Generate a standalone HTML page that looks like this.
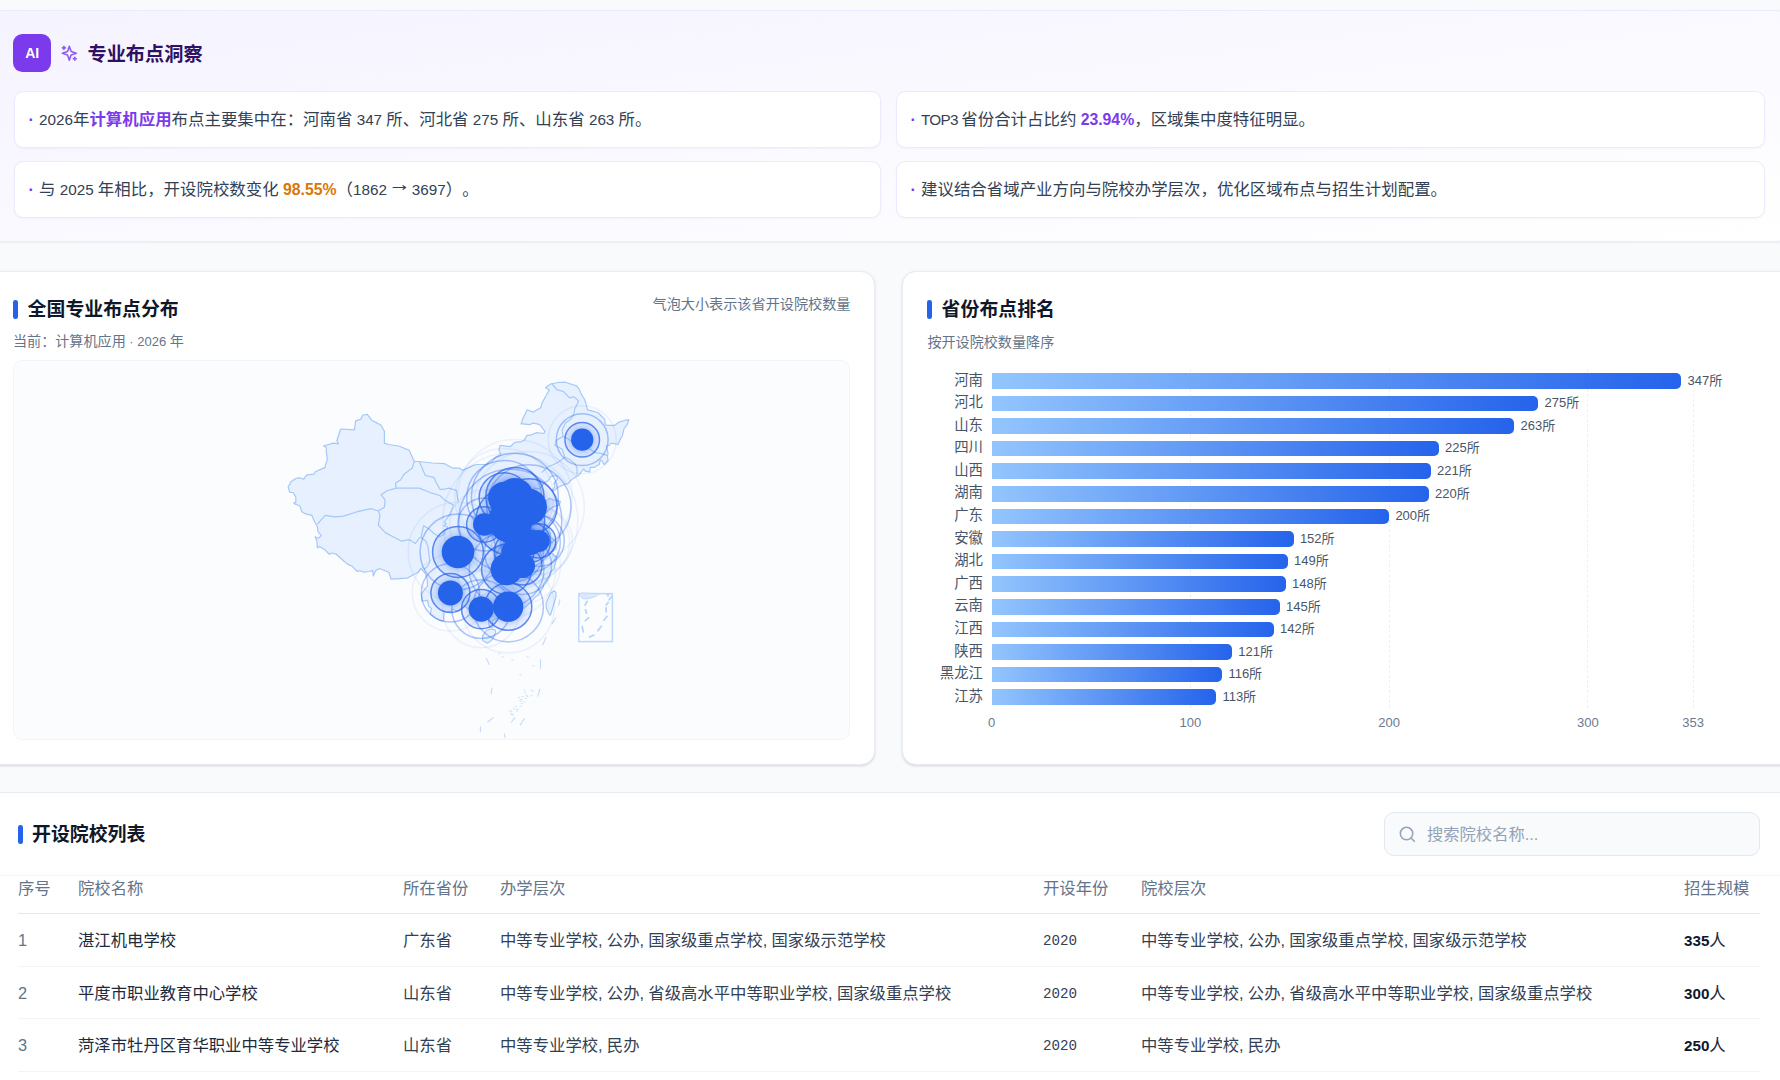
<!DOCTYPE html>
<html lang="zh-CN">
<head>
<meta charset="utf-8">
<title>专业布点洞察</title>
<style>
*{box-sizing:border-box;margin:0;padding:0}
html,body{width:1780px;height:1080px;overflow:hidden;background:#f8fafc}
body{text-spacing-trim:space-all;font-family:"Liberation Sans","Noto Sans CJK SC",sans-serif;color:#1e293b;position:relative}
.abs{position:absolute}
.t{position:absolute;white-space:nowrap;line-height:1}
/* AI panel */
#ai{left:-12.5px;top:10px;width:1803.5px;height:232px;background:linear-gradient(to bottom right,#f5f3ff 0%,#fff 100%);border:1px solid #ede9fe;border-radius:14px;box-shadow:0 1px 2px rgba(30,27,75,.05)}
.badge{left:13.4px;top:34px;width:37.4px;height:38px;border-radius:9.3px;background:#7c3aed;color:#fff;font-weight:700;font-size:14px;letter-spacing:-.2px;display:flex;align-items:center;justify-content:center}
.ins{background:#fff;border:1px solid #ede9fe;border-radius:9.3px;height:57px;box-shadow:0 1px 2px rgba(124,58,237,.05)}
.ins .t{top:19px;font-size:16.45px;color:#334155}
.dot{color:#7c3aed;font-weight:700}
.n{font-size:15.25px}
.cj{display:inline-block;transform:translateY(-5.2px) scale(1.38,1.3);transform-origin:50% 58%}
.hl{color:#7c3aed;font-weight:700}
.n .hl,.n .hl2{font-size:15.8px}
.hl2{color:#d97706;font-weight:700}
/* cards */
.card{background:#fff;border:1px solid #e9edf2;border-radius:14px;box-shadow:0 1px 3px rgba(15,23,42,.10),0 1px 2px rgba(15,23,42,.06)}
.bar4{position:absolute;width:4.7px;height:19.2px;border-radius:2.35px;background:#2563eb}
.h2{font-size:18.9px;font-weight:700;color:#0f172a}
.sub{font-size:14.1px;color:#64748b}
/* table */
#tbl{left:0;top:792px;width:1780px;height:300px;background:#fff;border-top:1px solid #e8ecf1}
.th{font-size:16.35px;color:#64748b}
.td{font-size:16.35px;color:#334155;word-spacing:-.3px}
.nm{color:#1e293b}
.line{position:absolute;height:1px;background:#e9edf2;left:18px;width:1742px}

/* rank chart */
.gl{position:absolute;top:369px;height:339px;width:0;border-left:1px dashed #edf1f6}
.tick{top:716px;width:60px;text-align:center;font-size:13px;color:#6b7a90}
.cat{left:903px;width:80px;text-align:right;font-size:14.4px;color:#475569}
.hb{position:absolute;left:991.5px;height:15.6px;border-radius:0 5px 5px 0;background:linear-gradient(90deg,#93c5fd 0%,#2563eb 100%)}
.val{font-size:13px;color:#475569}
.idx{color:#64748b}
.yr{font-family:"Liberation Mono","DejaVu Sans Mono",monospace;font-size:14.2px;color:#334155}
.num{color:#1e293b}
.num b{font-weight:700;color:#0f172a;font-size:15.2px}
.search{left:1384px;top:812px;width:376px;height:44px;border:1px solid #e2e8f0;background:#f8fafc;border-radius:10px}
</style>
</head>
<body>
<!-- AI insight panel -->
<div id="ai" class="abs"></div>
<div class="abs badge">AI</div>
<svg class="abs" style="left:60.3px;top:43.8px" width="18.67" height="18.67" viewBox="0 0 24 24" fill="none" stroke="#8b5cf6" stroke-width="2" stroke-linecap="round" stroke-linejoin="round"><path d="m12 3-1.912 5.813a2 2 0 0 1-1.275 1.275L3 12l5.813 1.912a2 2 0 0 1 1.275 1.275L12 21l1.912-5.813a2 2 0 0 1 1.275-1.275L21 12l-5.813-1.912a2 2 0 0 1-1.275-1.275L12 3Z"/><path d="M5 3v4"/><path d="M19 17v4"/><path d="M3 5h4"/><path d="M17 19h4"/></svg>
<div class="t" style="left:87.5px;top:45px;font-size:19.2px;font-weight:700;color:#2e1065">专业布点洞察</div>

<div class="abs ins" style="left:14px;top:91px;width:867px"><span class="t" style="left:13.5px"><span class="dot">·</span></span><span class="t" style="left:24px"><span class="n">2026</span>年<span class="hl">计算机应用</span>布点主要集中在：河南省<span class="n"> 347 </span>所、河北省<span class="n"> 275 </span>所、山东省<span class="n"> 263 </span>所。</span></div>
<div class="abs ins" style="left:896px;top:91px;width:868.7px"><span class="t" style="left:13.5px"><span class="dot">·</span></span><span class="t" style="left:24px"><span class="n" style="letter-spacing:-.7px">TOP3 </span>省份合计占比约<span class="n"> <span class="hl">23.94%</span></span>，区域集中度特征明显。</span></div>
<div class="abs ins" style="left:14px;top:161px;width:867px"><span class="t" style="left:13.5px"><span class="dot">·</span></span><span class="t" style="left:24px">与<span class="n"> 2025 </span>年相比，开设院校数变化<span class="n"> <span class="hl2">98.55%</span></span>（<span class="n">1862 </span><span class="cj">→</span><span class="n"> 3697</span>）。</span></div>
<div class="abs ins" style="left:896px;top:161px;width:868.7px"><span class="t" style="left:13.5px"><span class="dot">·</span></span><span class="t" style="left:24px">建议结合省域产业方向与院校办学层次，优化区域布点与招生计划配置。</span></div>

<!-- Map card -->
<div class="abs card" id="mapcard" style="left:-20px;top:271px;width:895px;height:494px"></div>
<div class="bar4" style="left:13.3px;top:299.6px"></div>
<div class="t h2" style="left:27.6px;top:301px">全国专业布点分布</div>
<div class="t sub" style="left:13px;top:334.3px">当前：计算机应用<span style="font-size:13px"> · 2026 </span>年</div>
<div class="t" style="right:929.5px;top:297.2px;font-size:14.15px;color:#64748b">气泡大小表示该省开设院校数量</div>
<div class="abs" id="mapbox" style="left:13.2px;top:360.2px;width:836.8px;height:379.8px;background:#fbfcfe;border:1px solid #f1f5f9;border-radius:9.3px;overflow:hidden">
<svg class="abs" style="left:0;top:0" width="834" height="377" viewBox="0 0 834 377">
<g fill="#e6f0fe" stroke="#a6c8f8" stroke-width="1.2" stroke-linejoin="round">
<path d="M353.3,53.3 L357.7,59.2 L363.2,62.1 L367.1,64.3 L370.4,70.3 L370.4,82.1 L374.3,83.5 L384.8,85.0 L395.3,89.4 L400.3,100.5 L405.3,100.5 L418.0,102.0 L430.7,102.7 L439.0,107.2 L445.7,107.2 L448.5,109.4 L458.4,104.9 L462.3,103.5 L472.3,103.5 L478.3,100.5 L481.7,96.1 L486.6,93.9 L485.0,88.7 L486.1,84.3 L496.1,85.7 L501.0,81.3 L507.7,80.6 L510.4,79.1 L512.7,74.7 L517.1,73.9 L522.1,71.7 L529.8,72.5 L530.9,70.3 L526.5,64.3 L523.2,62.9 L519.3,62.1 L515.4,63.6 L509.3,62.9 L507.1,62.9 L508.8,57.7 L513.2,48.8 L519.3,51.1 L527.0,46.6 L527.6,42.9 L532.0,34.8 L535.4,28.9 L531.5,26.7 L536.5,23.0 L544.2,21.5 L551.4,21.2 L559.2,23.8 L562.5,24.9 L565.2,28.2 L567.5,33.4 L570.2,37.8 L571.9,42.2 L573.5,48.8 L579.6,50.3 L584.1,51.8 L587.9,55.5 L590.7,58.4 L591.3,62.9 L592.4,64.3 L600.7,64.3 L604.5,61.4 L611.2,59.2 L614.9,58.8 L612.8,64.3 L610.1,67.3 L608.4,74.7 L606.2,78.4 L604.0,83.5 L597.3,82.1 L595.1,84.3 L592.4,85.0 L594.0,91.7 L593.5,95.3 L594.0,99.8 L590.1,103.5 L587.9,99.8 L586.3,99.0 L585.2,103.5 L582.4,104.9 L580.7,106.4 L576.3,106.4 L575.8,110.8 L571.3,110.1 L569.7,107.9 L564.7,114.5 L559.2,117.5 L555.8,120.4 L554.2,122.6 L550.8,123.4 L544.2,126.3 L540.3,129.3 L537.6,130.0 L540.9,125.6 L539.8,122.6 L543.7,117.5 L542.0,114.5 L537.0,115.3 L534.2,119.7 L530.4,121.5 L527.6,125.6 L525.4,127.8 L520.4,127.1 L518.7,129.3 L518.2,131.5 L520.4,135.2 L525.4,136.7 L527.0,137.4 L525.7,141.1 L527.0,142.6 L530.9,141.1 L535.4,137.4 L539.2,138.9 L543.1,139.6 L546.4,140.4 L545.3,144.1 L539.8,145.5 L535.4,148.5 L533.1,150.7 L529.3,155.1 L527.0,158.8 L530.9,162.5 L533.7,165.5 L536.5,172.8 L536.5,175.8 L541.4,180.2 L542.0,182.4 L542.0,187.6 L539.8,189.8 L537.0,190.5 L534.2,192.8 L538.1,192.8 L541.4,195.3 L543.1,195.7 L542.0,200.9 L540.3,204.6 L540.3,207.5 L537.0,210.5 L534.8,215.6 L532.6,218.6 L529.8,222.3 L529.3,226.0 L526.5,230.4 L524.3,234.1 L521.0,236.3 L516.5,241.5 L513.2,244.4 L509.3,247.4 L503.8,248.8 L499.4,251.1 L496.1,252.5 L495.5,248.8 L492.7,254.0 L487.2,255.5 L481.7,257.7 L478.3,259.9 L478.9,266.6 L475.6,266.6 L474.5,260.7 L475.6,257.7 L471.1,257.7 L467.3,257.0 L465.1,257.7 L461.7,257.0 L457.9,254.0 L457.3,249.6 L453.4,247.4 L450.1,244.4 L447.3,247.4 L442.9,250.3 L439.0,248.1 L436.8,250.3 L432.4,251.1 L430.2,250.3 L429.6,259.9 L427.4,259.9 L421.9,257.7 L421.3,257.0 L416.3,253.3 L417.5,247.4 L414.7,245.2 L413.6,239.3 L408.0,240.0 L407.5,233.3 L410.8,228.2 L413.6,225.2 L413.0,217.1 L411.4,212.7 L406.9,207.5 L404.2,211.2 L398.6,214.2 L393.1,217.1 L382.0,217.9 L377.1,218.2 L374.8,211.2 L371.0,209.7 L365.4,207.5 L361.6,209.7 L359.3,214.9 L358.8,209.7 L354.9,210.5 L349.9,211.2 L346.1,209.7 L343.3,210.5 L338.3,205.3 L333.3,203.1 L328.3,198.7 L321.7,192.8 L316.7,192.0 L315.6,193.5 L311.2,189.1 L305.6,185.4 L303.4,186.9 L302.9,180.2 L301.2,175.8 L304.5,177.3 L307.3,174.3 L304.0,170.6 L303.4,165.5 L300.7,161.0 L297.9,154.4 L291.8,152.9 L287.9,150.7 L285.7,144.8 L281.3,143.3 L279.6,141.8 L281.8,141.5 L281.8,135.9 L279.1,131.5 L275.8,131.5 L274.1,125.6 L276.3,122.6 L276.3,121.2 L281.8,117.5 L285.7,116.7 L289.6,118.2 L292.9,113.8 L300.1,113.1 L301.2,110.8 L311.2,106.4 L311.2,104.9 L313.4,98.3 L312.3,90.9 L312.3,86.5 L309.5,85.0 L319.5,82.1 L324.5,82.8 L322.8,79.8 L326.7,68.0 L340.5,68.8 L341.6,59.9 L346.6,58.4 L348.8,54.0Z"/>
<path d="M537.0,231.9 L540.3,229.7 L542.0,231.9 L542.0,235.6 L539.2,245.2 L536.5,254.0 L535.4,254.0 L532.6,248.1 L532.0,242.2 L535.4,234.8Z"/>
<path d="M468.9,274.7 L472.3,269.5 L476.1,268.0 L481.1,268.8 L481.7,271.7 L478.9,277.6 L476.1,280.6 L473.4,282.1 L468.9,279.8 L468.4,276.2Z"/>
</g>
<g fill="none" stroke="#a6c8f8" stroke-width="1.2" stroke-linejoin="round">
<path d="M303.4,163.2 L311.2,154.4 L321.1,155.9 L329.5,155.1 L343.3,150.7 L357.1,147.7 L364.3,150.0"/>
<path d="M364.3,150.0 L370.4,146.3 L371.0,138.9 L367.1,133.7 L372.6,130.0 L382.0,127.1"/>
<path d="M382.0,127.1 L381.5,121.9 L386.5,119.0 L390.3,113.1 L398.1,107.2 L400.3,100.5"/>
<path d="M364.3,150.0 L366.0,154.4 L364.3,164.0 L371.0,171.4 L377.6,175.0 L387.6,180.2 L395.3,178.7 L401.4,182.4 L405.8,176.5 L406.9,176.5"/>
<path d="M406.9,176.5 L411.9,180.2 L414.1,186.1 L415.2,195.0 L415.8,200.9 L413.0,206.0 L409.7,208.3"/>
<path d="M406.9,176.5 L409.7,164.7 L414.7,167.7 L420.2,172.8 L425.8,175.8 L430.7,172.8 L430.7,169.1 L434.1,166.2"/>
<path d="M382.0,127.1 L389.8,127.1 L398.6,127.1 L405.3,127.1 L412.5,130.0 L418.0,132.2 L425.8,134.5 L430.7,138.9 L435.2,141.8 L439.6,144.1 L437.4,149.2 L435.7,153.6 L433.5,156.6 L430.2,161.0 L432.4,163.2 L429.6,164.7 L434.1,166.2"/>
<path d="M405.3,100.5 L409.2,109.4 L411.4,114.5 L420.2,116.7 L421.9,121.2 L426.3,128.6 L431.8,127.8 L434.6,127.1 L442.4,129.3 L444.0,140.4"/>
<path d="M538.1,23.0 L543.1,28.9 L549.2,30.4 L555.8,37.0 L559.7,35.6 L564.7,40.0 L560.8,48.1 L559.7,54.0 L556.4,58.4 L551.4,62.1 L548.1,69.5 L549.2,75.4"/>
<path d="M549.2,75.4 L553.6,77.6 L558.6,81.3 L564.7,83.5 L570.2,87.2 L575.8,88.0 L581.3,91.7 L586.8,92.4 L593.5,94.6"/>
<path d="M550.8,96.1 L555.3,98.3 L560.8,102.7 L563.0,106.4 L563.0,114.5"/>
<path d="M549.2,75.4 L542.5,79.1 L540.9,84.3 L548.1,88.0 L550.8,96.1"/>
<path d="M550.8,96.1 L545.3,100.5 L539.8,103.5 L534.2,105.7 L527.6,111.6"/>
</g>
<rect x="564.8" y="232.6" width="33.6" height="48" fill="none" stroke="#c0d9fb" stroke-width="1.5"/>
<path d="M565.2,233.6 L567.4,232.0 L585.8,232.6 L580.6,235.8 L573.9,237.8 L568.9,237.8Z" fill="#dbe9fd" stroke="#c0d9fb" stroke-width="1"/>
<path d="M591.7,232.9 L596.3,232.9 L593.9,236.3Z" fill="#c0d9fb" stroke="none"/>
<path d="M573.1,240.4 L571.1,244.1 M571.4,248.8 L572.5,252.1 M574.7,256.7 L571.4,259.7 M568.2,265.6 L569.2,270.8 M575.4,276.0 L579.9,274.1 M583.9,269.8 L587.3,265.2 M589.9,259.2 L592.9,255.5 M592.1,246.9 L592.1,250.7 M592.3,244.0 L594.1,241.5 M595.1,238.8 L597.8,235.4" fill="none" stroke="#b9d4fb" stroke-width="1.8" stroke-linecap="round"/>
<path d="M472.3,297.1 L475.1,303.4 M526.5,298.5 L526.5,307.6 M477.9,327.0 L477.2,332.6 M525.8,328.4 L523.7,335.3 M466.4,365.9 L466.4,370.8 M490.4,372.8 L491.1,377.0 M510.5,357.6 L506.4,363.8 M500.8,356.8 L497.3,361.0 M545.9,238.8 L544.6,244.4 M541.8,256.8 L538.3,262.4 M532.1,276.3 L528.6,283.9 M473.8,360.8 L479.3,356.8" fill="none" stroke="#c4dbfb" stroke-width="1.1" stroke-linecap="round"/>
<path d="M499.4,347.6h1.2 M508.1,335.6h1.2 M496.8,352.5h1.2 M502.9,348.5h1.2 M512.0,334.2h1.2 M498.2,353.8h1.2 M507.2,342.6h1.2 M497.3,353.9h1.2 M496.7,349.9h1.2 M506.0,345.5h1.2 M512.9,335.4h1.2 M511.0,337.5h1.2 M509.9,329.0h1.2 M502.3,348.6h1.2 M506.0,338.6h1.2 M501.1,345.4h1.2 M509.9,341.1h1.2 M517.1,334.6h1.2 M505.9,340.2h1.2 M518.3,330.3h1.2 M507.2,338.9h1.2 M504.7,336.4h1.2 M516.5,329.3h1.2 M510.7,331.2h1.2 M502.4,350.1h1.2 M495.7,350.0h1.2 M484.8,292.8h1.4 M487.8,295.8h1.4 M497.8,298.8h1.4 M512.8,295.8h1.4 M518.8,304.8h1.4 M505.8,313.8h1.4" fill="none" stroke="#cfe1fc" stroke-width="1" stroke-linecap="round"/>
<defs><radialGradient id="halo" cx="50%" cy="50%" r="50%"><stop offset="0.62" stop-color="#2563eb" stop-opacity=".27"/><stop offset="0.8" stop-color="#2563eb" stop-opacity=".14"/><stop offset="1" stop-color="#2563eb" stop-opacity=".08"/></radialGradient></defs>
<g fill="none" stroke="#2563eb" stroke-width="1.5"><circle cx="496.3" cy="159.8" r="67.6" stroke-opacity=".08"/><circle cx="496.3" cy="159.8" r="51.5" stroke-opacity=".36"/><circle cx="496.3" cy="159.8" r="34.4" stroke-opacity=".72" fill="url(#halo)"/><circle cx="500.9" cy="135.7" r="57.1" stroke-opacity=".08"/><circle cx="500.9" cy="135.7" r="43.5" stroke-opacity=".36"/><circle cx="500.9" cy="135.7" r="29.1" stroke-opacity=".72" fill="url(#halo)"/><circle cx="514.9" cy="145.9" r="55.4" stroke-opacity=".08"/><circle cx="514.9" cy="145.9" r="42.2" stroke-opacity=".36"/><circle cx="514.9" cy="145.9" r="28.2" stroke-opacity=".72" fill="url(#halo)"/><circle cx="444.0" cy="191.0" r="49.8" stroke-opacity=".08"/><circle cx="444.0" cy="191.0" r="37.9" stroke-opacity=".36"/><circle cx="444.0" cy="191.0" r="25.4" stroke-opacity=".72" fill="url(#halo)"/><circle cx="490.2" cy="136.9" r="49.3" stroke-opacity=".08"/><circle cx="490.2" cy="136.9" r="37.5" stroke-opacity=".36"/><circle cx="490.2" cy="136.9" r="25.1" stroke-opacity=".72" fill="url(#halo)"/><circle cx="492.6" cy="208.3" r="49.1" stroke-opacity=".08"/><circle cx="492.6" cy="208.3" r="37.4" stroke-opacity=".36"/><circle cx="492.6" cy="208.3" r="25.0" stroke-opacity=".72" fill="url(#halo)"/><circle cx="494.2" cy="245.7" r="46.2" stroke-opacity=".08"/><circle cx="494.2" cy="245.7" r="35.2" stroke-opacity=".36"/><circle cx="494.2" cy="245.7" r="23.6" stroke-opacity=".72" fill="url(#halo)"/><circle cx="516.4" cy="181.2" r="39.2" stroke-opacity=".08"/><circle cx="516.4" cy="181.2" r="29.9" stroke-opacity=".36"/><circle cx="516.4" cy="181.2" r="20.0" stroke-opacity=".72" fill="url(#halo)"/><circle cx="500.0" cy="191.1" r="38.8" stroke-opacity=".08"/><circle cx="500.0" cy="191.1" r="29.5" stroke-opacity=".36"/><circle cx="500.0" cy="191.1" r="19.8" stroke-opacity=".72" fill="url(#halo)"/><circle cx="467.2" cy="248.1" r="38.6" stroke-opacity=".08"/><circle cx="467.2" cy="248.1" r="29.4" stroke-opacity=".36"/><circle cx="467.2" cy="248.1" r="19.7" stroke-opacity=".72" fill="url(#halo)"/><circle cx="436.4" cy="231.9" r="38.2" stroke-opacity=".08"/><circle cx="436.4" cy="231.9" r="29.1" stroke-opacity=".36"/><circle cx="436.4" cy="231.9" r="19.5" stroke-opacity=".72" fill="url(#halo)"/><circle cx="508.7" cy="204.7" r="37.8" stroke-opacity=".08"/><circle cx="508.7" cy="204.7" r="28.8" stroke-opacity=".36"/><circle cx="508.7" cy="204.7" r="19.3" stroke-opacity=".72" fill="url(#halo)"/><circle cx="470.3" cy="163.5" r="34.7" stroke-opacity=".08"/><circle cx="470.3" cy="163.5" r="26.4" stroke-opacity=".36"/><circle cx="470.3" cy="163.5" r="17.7" stroke-opacity=".72" fill="url(#halo)"/><circle cx="568.2" cy="78.7" r="34.0" stroke-opacity=".08"/><circle cx="568.2" cy="78.7" r="25.9" stroke-opacity=".36"/><circle cx="568.2" cy="78.7" r="17.3" stroke-opacity=".72" fill="url(#halo)"/><circle cx="524.7" cy="179.9" r="33.6" stroke-opacity=".08"/><circle cx="524.7" cy="179.9" r="25.6" stroke-opacity=".36"/><circle cx="524.7" cy="179.9" r="17.1" stroke-opacity=".72" fill="url(#halo)"/></g>
<g fill="#2563eb"><circle cx="496.3" cy="159.8" r="22.1"/><circle cx="500.9" cy="135.7" r="18.7"/><circle cx="514.9" cy="145.9" r="18.1"/><circle cx="444.0" cy="191.0" r="16.3"/><circle cx="490.2" cy="136.9" r="16.1"/><circle cx="492.6" cy="208.3" r="16.0"/><circle cx="494.2" cy="245.7" r="15.1"/><circle cx="516.4" cy="181.2" r="12.8"/><circle cx="500.0" cy="191.1" r="12.7"/><circle cx="467.2" cy="248.1" r="12.6"/><circle cx="436.4" cy="231.9" r="12.5"/><circle cx="508.7" cy="204.7" r="12.3"/><circle cx="470.3" cy="163.5" r="11.3"/><circle cx="568.2" cy="78.7" r="11.1"/><circle cx="524.7" cy="179.9" r="11.0"/></g>
</svg>
</div>

<!-- Rank card -->
<div class="abs card" id="rankcard" style="left:902px;top:271px;width:900px;height:494px"></div>
<div class="bar4" style="left:927.4px;top:299.6px"></div>
<div class="t h2" style="left:941.6px;top:301px">省份布点排名</div>
<div class="t sub" style="left:927.4px;top:334.6px">按开设院校数量降序</div>
<div class="t tick" style="left:961.5px">0</div>
<div class="gl" style="left:1189.8px"></div>
<div class="t tick" style="left:1160.3px">100</div>
<div class="gl" style="left:1388.6px"></div>
<div class="t tick" style="left:1359.1px">200</div>
<div class="gl" style="left:1587.3px"></div>
<div class="t tick" style="left:1557.8px">300</div>
<div class="gl" style="left:1692.7px"></div>
<div class="t tick" style="left:1663.2px">353</div>
<div class="t cat" style="top:372.5px">河南</div>
<div class="hb" style="top:373.1px;width:689.8px"></div>
<div class="t val" style="left:1687.6px;top:373.6px">347所</div>
<div class="t cat" style="top:395.0px">河北</div>
<div class="hb" style="top:395.6px;width:546.7px"></div>
<div class="t val" style="left:1544.5px;top:396.1px">275所</div>
<div class="t cat" style="top:417.6px">山东</div>
<div class="hb" style="top:418.2px;width:522.8px"></div>
<div class="t val" style="left:1520.6px;top:418.7px">263所</div>
<div class="t cat" style="top:440.2px">四川</div>
<div class="hb" style="top:440.8px;width:447.3px"></div>
<div class="t val" style="left:1445.1px;top:441.3px">225所</div>
<div class="t cat" style="top:462.8px">山西</div>
<div class="hb" style="top:463.4px;width:439.3px"></div>
<div class="t val" style="left:1437.1px;top:463.9px">221所</div>
<div class="t cat" style="top:485.4px">湖南</div>
<div class="hb" style="top:486.0px;width:437.3px"></div>
<div class="t val" style="left:1435.1px;top:486.5px">220所</div>
<div class="t cat" style="top:508.0px">广东</div>
<div class="hb" style="top:508.6px;width:397.6px"></div>
<div class="t val" style="left:1395.4px;top:509.1px">200所</div>
<div class="t cat" style="top:530.6px">安徽</div>
<div class="hb" style="top:531.2px;width:302.1px"></div>
<div class="t val" style="left:1299.9px;top:531.7px">152所</div>
<div class="t cat" style="top:553.2px">湖北</div>
<div class="hb" style="top:553.8px;width:296.2px"></div>
<div class="t val" style="left:1294.0px;top:554.3px">149所</div>
<div class="t cat" style="top:575.8px">广西</div>
<div class="hb" style="top:576.4px;width:294.2px"></div>
<div class="t val" style="left:1292.0px;top:576.9px">148所</div>
<div class="t cat" style="top:598.4px">云南</div>
<div class="hb" style="top:599.0px;width:288.2px"></div>
<div class="t val" style="left:1286.0px;top:599.5px">145所</div>
<div class="t cat" style="top:620.9px">江西</div>
<div class="hb" style="top:621.5px;width:282.3px"></div>
<div class="t val" style="left:1280.1px;top:622.0px">142所</div>
<div class="t cat" style="top:643.5px">陕西</div>
<div class="hb" style="top:644.1px;width:240.5px"></div>
<div class="t val" style="left:1238.3px;top:644.6px">121所</div>
<div class="t cat" style="top:666.1px">黑龙江</div>
<div class="hb" style="top:666.7px;width:230.6px"></div>
<div class="t val" style="left:1228.4px;top:667.2px">116所</div>
<div class="t cat" style="top:688.7px">江苏</div>
<div class="hb" style="top:689.3px;width:224.6px"></div>
<div class="t val" style="left:1222.4px;top:689.8px">113所</div>

<!-- Table -->
<div id="tbl" class="abs"></div>
<div class="bar4" style="left:17.9px;top:824.5px"></div>
<div class="t h2" style="left:32px;top:826px">开设院校列表</div>
<div class="abs search"></div>
<svg class="abs" style="left:1397.9px;top:824.5px" width="18.67" height="18.67" viewBox="0 0 24 24" fill="none" stroke="#94a3b8" stroke-width="2" stroke-linecap="round" stroke-linejoin="round"><circle cx="11" cy="11" r="8"/><path d="m21 21-4.3-4.3"/></svg>
<div class="t" style="left:1427px;top:826px;font-size:16.3px;color:#94a3b8">搜索院校名称...</div>
<div class="line" style="top:875px;left:0;width:1780px;background:#f1f5f9"></div>
<div class="t th" style="left:18px;top:880px">序号</div>
<div class="t th" style="left:78px;top:880px">院校名称</div>
<div class="t th" style="left:403px;top:880px">所在省份</div>
<div class="t th" style="left:500px;top:880px">办学层次</div>
<div class="t th" style="left:1043px;top:880px">开设年份</div>
<div class="t th" style="left:1141px;top:880px">院校层次</div>
<div class="t th" style="left:1684px;top:880px">招生规模</div>
<div class="line" style="top:913px;background:#e2e8f0"></div>
<div class="t td idx" style="left:18px;top:932.3px">1</div>
<div class="t td nm" style="left:78px;top:932.3px">湛江机电学校</div>
<div class="t td" style="left:403px;top:932.3px">广东省</div>
<div class="t td" style="left:500px;top:932.3px">中等专业学校, 公办, 国家级重点学校, 国家级示范学校</div>
<div class="t td yr" style="left:1043px;top:934.3px">2020</div>
<div class="t td" style="left:1141px;top:932.3px">中等专业学校, 公办, 国家级重点学校, 国家级示范学校</div>
<div class="t td num" style="left:1684px;top:932.3px"><b>335</b>人</div>
<div class="line" style="top:966px;background:#f1f5f9"></div>
<div class="t td idx" style="left:18px;top:984.8px">2</div>
<div class="t td nm" style="left:78px;top:984.8px">平度市职业教育中心学校</div>
<div class="t td" style="left:403px;top:984.8px">山东省</div>
<div class="t td" style="left:500px;top:984.8px">中等专业学校, 公办, 省级高水平中等职业学校, 国家级重点学校</div>
<div class="t td yr" style="left:1043px;top:986.8px">2020</div>
<div class="t td" style="left:1141px;top:984.8px">中等专业学校, 公办, 省级高水平中等职业学校, 国家级重点学校</div>
<div class="t td num" style="left:1684px;top:984.8px"><b>300</b>人</div>
<div class="line" style="top:1018px;background:#f1f5f9"></div>
<div class="t td idx" style="left:18px;top:1037.3px">3</div>
<div class="t td nm" style="left:78px;top:1037.3px">菏泽市牡丹区育华职业中等专业学校</div>
<div class="t td" style="left:403px;top:1037.3px">山东省</div>
<div class="t td" style="left:500px;top:1037.3px">中等专业学校, 民办</div>
<div class="t td yr" style="left:1043px;top:1039.3px">2020</div>
<div class="t td" style="left:1141px;top:1037.3px">中等专业学校, 民办</div>
<div class="t td num" style="left:1684px;top:1037.3px"><b>250</b>人</div>
<div class="line" style="top:1071px;background:#f1f5f9"></div>
</body>
</html>
